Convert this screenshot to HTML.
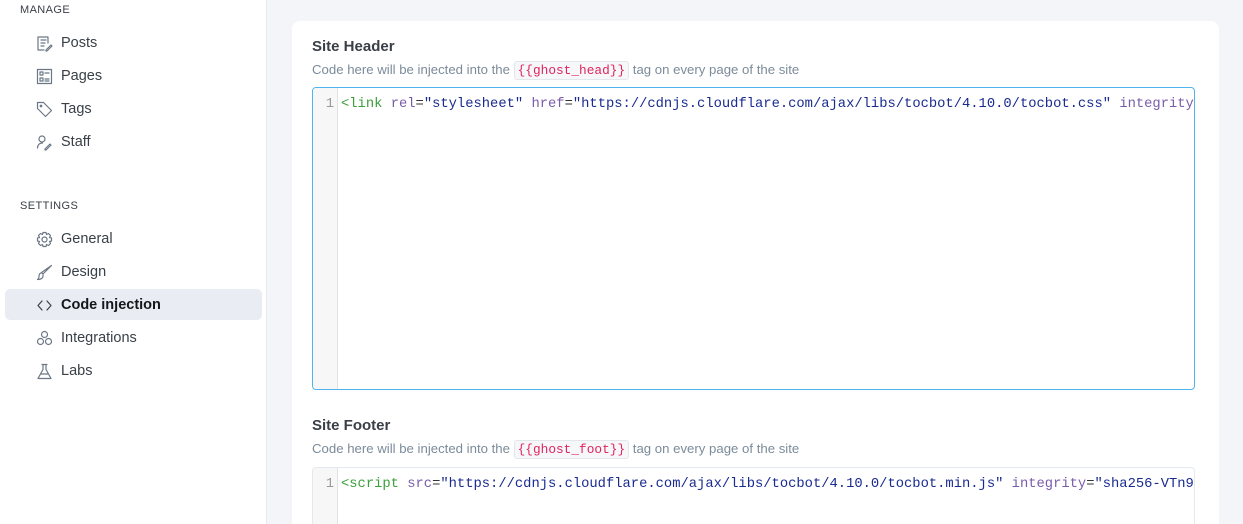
<!DOCTYPE html>
<html><head><meta charset="utf-8"><style>
*{margin:0;padding:0;box-sizing:border-box}
html{width:1243px;height:524px;overflow:hidden}
body{width:1243px;height:524px;overflow:hidden;background:#f4f5f8;font-family:"Liberation Sans",sans-serif;position:relative}
#side{position:absolute;left:0;top:0;width:267px;height:524px;background:#fff;border-right:1px solid #e6e9ee}
.h{position:absolute;left:20px;font-size:11px;letter-spacing:.4px;color:#3a3f47}
.it{position:absolute;left:5px;width:257px;height:31px;border-radius:5px;font-size:14.5px;color:#394047;line-height:31px;padding-left:56px}
.it svg{position:absolute;left:31px;top:7px;width:17px;height:17px;fill:none;stroke:#6b7785;stroke-width:1.2;stroke-linecap:round;stroke-linejoin:round}
.act{background:#e9edf3;font-weight:bold;color:#15171a}
.card{position:absolute;left:292px;top:21px;width:927px;height:503px;background:#fff;border-radius:8px 8px 0 0;overflow:hidden}
.t{position:absolute;left:20px;font-size:15px;font-weight:bold;color:#3a3f47}
.d{position:absolute;left:20px;font-size:13.2px;color:#7c8b9a}
.d code{font-family:"Liberation Mono",monospace;font-size:12.8px;color:#e0245e;background:#f5f7f9;border:1px solid #e3e7eb;border-radius:3px;padding:1px 3px}
.box{position:absolute;left:20px;width:883px;border-radius:4px;overflow:hidden;background:#fff}
.g{position:absolute;left:0;top:0;bottom:0;width:25px;background:#f7f7f7;border-right:1px solid #e2e2e2;font-family:"Liberation Mono",monospace;font-size:13.8px;color:#999;text-align:right;padding-right:3px;padding-top:9px}
.c{position:absolute;left:28px;top:9px;font-family:"Liberation Mono",monospace;font-size:13.8px;white-space:pre;color:#333}
.tg{color:#3ba03b}.at{color:#7a5cab}.s{color:#1a2b8f}
</style></head><body>
<div id="side">
<div class="h" style="top:4px">MANAGE</div>
<div class="it" style="top:28px"><svg viewBox="0 0 17 17"><path d="M12 8V2H2v13h6M5 5h5M5 8h4M5 11h3M10 15l5-5 1 1-5 5h-1z"/></svg>Posts</div>
<div class="it" style="top:61px"><svg viewBox="0 0 17 17"><rect x="1.5" y="1.5" width="14" height="14"/><rect x="4" y="4" width="3" height="3"/><rect x="4" y="10" width="3" height="3"/><path d="M9 5h4M9 11h4M9 13h4"/></svg>Pages</div>
<div class="it" style="top:94px"><svg viewBox="0 0 17 17"><path d="M1.5 1.5h6l8 8-6 6-8-8z"/><circle cx="5" cy="5" r=".8"/></svg>Tags</div>
<div class="it" style="top:127px"><svg viewBox="0 0 17 17"><circle cx="6" cy="5" r="3"/><path d="M1.5 14c0-3 2-5 5-5M9 15l5-5 1 1-5 5h-1z"/></svg>Staff</div>
<div class="h" style="top:200px">SETTINGS</div>
<div class="it" style="top:224px"><svg viewBox="0 0 17 17"><circle cx="8.5" cy="8.5" r="2.5"/><path d="M7 1.5h3l.5 2 2-1 2 2-1 2 2 .5v3l-2 .5 1 2-2 2-2-1-.5 2H7l-.5-2-2 1-2-2 1-2-2-.5V7l2-.5-1-2 2-2 2 1z"/></svg>General</div>
<div class="it" style="top:257px"><svg viewBox="0 0 17 17"><path d="M15.5 1.5L7 10l-1.5-1.5zM5.5 9c-2 0-2.5 2-2.5 3.5S2 15.5 1.5 15.5c3 0 6-1 5.5-4.5"/></svg>Design</div>
<div class="it act" style="top:289px;line-height:33px"><svg viewBox="0 0 17 17" style="stroke:#394047;top:8px"><path d="M6 4L2 8.5 6 13M11 4l4 4.5-4 4.5"/></svg>Code injection</div>
<div class="it" style="top:323px"><svg viewBox="0 0 17 17"><circle cx="8.5" cy="4.5" r="3"/><circle cx="4.5" cy="11.5" r="3"/><circle cx="12.5" cy="11.5" r="3"/></svg>Integrations</div>
<div class="it" style="top:356px"><svg viewBox="0 0 17 17"><path d="M6 1.5h5M7 1.5v5L2 15.5h13L10 6.5v-5M4.5 11h8"/></svg>Labs</div>
</div>
<div class="card">
<div class="t" style="top:17px">Site Header</div>
<div class="d" style="top:41px">Code here will be injected into the <code>{{ghost_head}}</code> tag on every page of the site</div>
<div class="box" style="top:66px;height:303px;border:1px solid #4fb4ee">
<div class="g">1</div>
<div class="c"><span class="tg">&lt;link</span> <span class="at">rel</span>=<span class="s">"stylesheet"</span> <span class="at">href</span>=<span class="s">"https://cdnjs.cloudflare.com/ajax/libs/tocbot/4.10.0/tocbot.css"</span> <span class="at">integrity</span>=<span class="s">"sha256</span></div>
</div>
<div class="t" style="top:396px">Site Footer</div>
<div class="d" style="top:420px">Code here will be injected into the <code>{{ghost_foot}}</code> tag on every page of the site</div>
<div class="box" style="top:446px;height:57px;border:1px solid #e3e9ee;border-bottom:none;border-radius:4px 4px 0 0">
<div class="g">1</div>
<div class="c"><span class="tg">&lt;script</span> <span class="at">src</span>=<span class="s">"https://cdnjs.cloudflare.com/ajax/libs/tocbot/4.10.0/tocbot.min.js"</span> <span class="at">integrity</span>=<span class="s">"sha256-VTn9Xz</span></div>
</div>
</div>
</body></html>
